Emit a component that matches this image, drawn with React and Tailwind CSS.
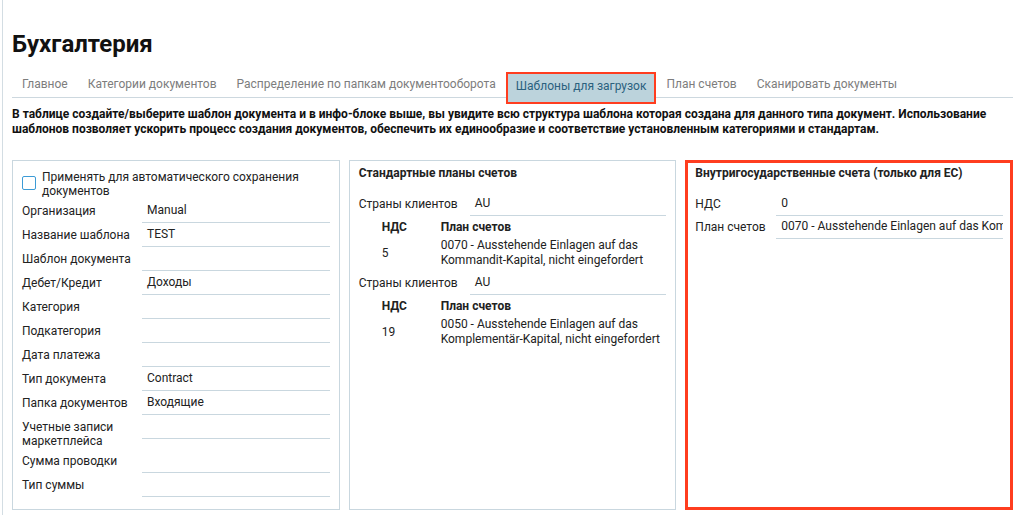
import React from 'react';

const font = { fontFamily: 'Roboto, "Noto Sans", sans-serif' };

const tabs = [
  'Главное',
  'Категории документов',
  'Распределение по папкам документооборота',
  'Шаблоны для загрузок',
  'План счетов',
  'Сканировать документы',
];

const fields = [
  ['Организация', 'Manual'],
  ['Название шаблона', 'TEST'],
  ['Шаблон документа', ''],
  ['Дебет/Кредит', 'Доходы'],
  ['Категория', ''],
  ['Подкатегория', ''],
  ['Дата платежа', ''],
  ['Тип документа', 'Contract'],
  ['Папка документов', 'Входящие'],
  ['Учетные записи маркетплейса', ''],
  ['Сумма проводки', ''],
  ['Тип суммы', ''],
];

const plans = [
  { country: 'AU', vat: '5', lines: ['0070 - Ausstehende Einlagen auf das', 'Kommandit-Kapital, nicht eingefordert'] },
  { country: 'AU', vat: '19', lines: ['0050 - Ausstehende Einlagen auf das', 'Komplementär-Kapital, nicht eingefordert'] },
];

function Field({ label, value, labelW }) {
  return (
    <div className="flex items-start">
      <div className={`${labelW} shrink-0 pt-[5px] pb-[1px] leading-[14px]`}>{label}</div>
      <div className="flex-1 min-w-0 h-[24px] border-b border-[#c9d7df] pl-[5px] leading-[23px] whitespace-nowrap overflow-hidden">
        {value}
      </div>
    </div>
  );
}

export default function App() {
  return (
    <div className="min-h-[515px] w-[1015px] bg-white text-[12px] text-[#222]" style={font}>
      <div className="ml-[2px] border-l border-[#d3dde3] min-h-[515px] pl-[9px] pr-[2px] pt-[29px]">
        <h1 className="text-[24px] font-bold leading-[30px] text-[#111]">Бухгалтерия</h1>

        <div className="mt-[13px] flex items-end h-[26px] border-b border-[#cdd8df]">
          {tabs.map((t, i) =>
            i === 3 ? (
              <div
                key={t}
                className="relative z-10 h-[32px] -mb-[7px] border-[2px] border-[#ff3d1f] bg-[#bcd3dc] px-[8px] pt-[4px] leading-[16px] text-[#2b617e] whitespace-nowrap"
              >
                {t}
              </div>
            ) : (
              <div key={t} className="h-[25px] px-[10px] leading-[25px] text-[#7d7d7d] whitespace-nowrap">
                {t}
              </div>
            )
          )}
        </div>

        <p className="mt-[9px] text-[12px] font-bold leading-[15px] text-[#111]">
          В таблице создайте/выберите шаблон документа и в инфо-блоке выше, вы увидите всю структура шаблона которая создана для данного типа документ. Использование шаблонов позволяет ускорить процесс создания документов, обеспечить их единообразие и соответствие установленным категориями и стандартам.
        </p>

        <div className="mt-[23px] grid grid-cols-3 gap-[9px] h-[348px]">
          {/* left panel */}
          <div className="border border-[#c9d7df] px-[9px] pt-[10px] pb-[12px]">
            <div className="flex items-start h-[28px]">
              <span className="mt-[5px] w-[14px] h-[14px] shrink-0 rounded-[2px] border border-[#3c9bd6] bg-white" />
              <span className="ml-[6px] leading-[13.5px]">Применять для автоматического сохранения документов</span>
            </div>
            {fields.map(([l, v]) => (
              <Field key={l} label={l} value={v} labelW="w-[120px]" />
            ))}
          </div>

          {/* middle panel */}
          <div className="border border-[#c9d7df] px-[9px] pt-[5px]">
            <div className="text-[12px] font-bold leading-[15px]">Стандартные планы счетов</div>
            <div className="mt-[11px]">
              {plans.map((p, i) => (
                <div key={i} className={i ? 'mt-[3px]' : ''}>
                  <Field label="Страны клиентов" value={p.country} labelW="w-[111px]" />
                  <div className="pl-[23px] mt-[4px]">
                    <div className="flex font-bold leading-[15px]">
                      <div className="w-[59px] shrink-0">НДС</div>
                      <div>План счетов</div>
                    </div>
                    <div className="flex items-center mt-[3px] leading-[15px]">
                      <div className="w-[59px] shrink-0">{p.vat}</div>
                      <div>
                        {p.lines.map((ln) => (
                          <div key={ln} className="whitespace-nowrap">{ln}</div>
                        ))}
                      </div>
                    </div>
                  </div>
                </div>
              ))}
            </div>
          </div>

          {/* right panel */}
          <div className="border-[3px] border-[#ff3d1f] px-[7px] pt-[3px] min-w-0">
            <div className="text-[12px] font-bold leading-[15px]">Внутригосударственные счета (только для ЕС)</div>
            <div className="mt-[11px]">
              <Field label="НДС" value="0" labelW="w-[81px]" />
              <div className="-mt-[1px]">
                <Field label="План счетов" value="0070 - Ausstehende Einlagen auf das Kommandit-Kapital, nicht eingefordert" labelW="w-[81px]" />
              </div>
            </div>
          </div>
        </div>
      </div>
    </div>
  );
}
